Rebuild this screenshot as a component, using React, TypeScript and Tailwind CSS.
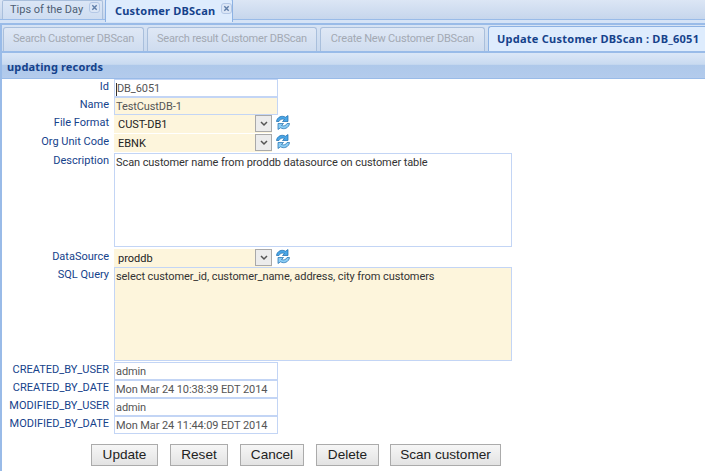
import type { ReactNode } from 'react'

const regular = "font-['Roboto','Noto_Sans',sans-serif]"
const bold = "font-['Noto_Sans',sans-serif] font-bold"

function CloseIcon() {
  return (
    <span className="ml-[6px] mb-[5px] flex h-[11px] w-[11px] items-center justify-center rounded-[3px] border border-[#b4c8e6] bg-[#dbe6f6]">
      <svg viewBox="0 0 8 8" className="h-[7px] w-[7px]">
        <path d="M1.500 1.500l5 5M6.500 1.500l-5 5" stroke="#5f7ea8" strokeWidth={1.6} />
      </svg>
    </span>
  )
}

function RefreshIcon() {
  return (
    <svg viewBox="0 0 16 17" className="ml-[3px] -mt-[1px] h-[17px] w-[16px]">
      <path d="M1.500 7.500C2 3 7 1 10.500 3.200L13 1.500V7.500H7.500L9.500 5.500C7.200 4.600 4.800 5.300 4 7.500z" fill="#4aa6e6" stroke="#1a6cae" strokeWidth={0.7} />
      <path d="M14.500 9.500C14 14 9 16 5.500 13.800L3 15.500V9.500H8.500L6.500 11.500C8.800 12.400 11.200 11.700 12 9.500z" fill="#8ccdf4" stroke="#1a6cae" strokeWidth={0.7} />
    </svg>
  )
}

function Row({ label, h, children }: { label: string; h: string; children: ReactNode }) {
  return (
    <div className={`flex ${h}`}>
      <div className="w-[108px] shrink-0 pr-[1px] pt-[1px] text-right text-[11px] leading-[14px] text-[#15428b]">{label}</div>
      <div className="ml-[4px] flex items-start">{children}</div>
    </div>
  )
}

function TextField({ value, cream, caret }: { value: string; cream?: boolean; caret?: boolean }) {
  return (
    <div className={`flex h-[18px] w-[164px] items-center border border-[#c3d5f5] pl-[1px] pt-[2px] text-[11px] tracking-[-0.1px] whitespace-nowrap text-[#555] ${cream ? 'bg-[#fdf5dc]' : 'bg-white'}`}>
      {caret && <span className="h-[13px] w-px shrink-0 bg-[#333]" />}
      {value}
    </div>
  )
}

function SelectField({ value }: { value: string }) {
  return (
    <>
      <div className="flex h-[18px] w-[158px] justify-between bg-[#fdf5dc] pl-[4px] text-[11px] leading-[14px] text-[#222]">
        <span className="pt-[3px]">{value}</span>
        <span className="flex h-[17px] w-[17px] items-center justify-center border border-[#a9a9a9] bg-[#ececec]">
          <svg viewBox="0 0 8 6" className="h-[6px] w-[8px]">
            <path d="M1 1l3 3 3-3" fill="none" stroke="#555" strokeWidth={1.5} />
          </svg>
        </span>
      </div>
      <RefreshIcon />
    </>
  )
}

function TextArea({ value, cream }: { value: string; cream?: boolean }) {
  return (
    <div className={`h-[94px] w-[398px] border border-[#c3d5f5] pl-[1px] pt-[2px] text-[11px] leading-[14px] tracking-[-0.08px] text-[#333] ${cream ? 'bg-[#fdf5dc]' : 'bg-white'}`}>
      {value}
    </div>
  )
}

function Button({ label, w }: { label: string; w: string }) {
  return (
    <button className={`h-[22px] ${w} border border-[#ababab] bg-gradient-to-b from-[#f6f6f6] to-[#e3e3e3] font-['Liberation_Sans',sans-serif] text-[13.6px] text-[#222]`}>
      {label}
    </button>
  )
}

function SubTab({ label, w }: { label: string; w: string }) {
  return (
    <div className={`flex h-[24px] ${w} items-center justify-center rounded-t-[3px] border border-b-0 border-[#a9bfdc] bg-gradient-to-b from-[#dfe8f5] to-[#cfdcef] text-[11px] tracking-[-0.2px] whitespace-nowrap text-[#a3a9b3]`}>
      {label}
    </div>
  )
}

export default function App() {
  return (
    <div className={`h-[471px] w-[705px] overflow-hidden bg-white ${regular}`}>
      {/* Outer tabs */}
      <div className="flex h-[20px] items-end border-b border-[#99bbe8] bg-gradient-to-b from-[#dce6f5] to-[#c6d6ec] pl-[2px]">
        <div className="flex h-[19px] w-[101px] items-center rounded-t-[2px] border border-b-0 border-[#a9bfdc] bg-gradient-to-b from-[#dbe6f6] to-[#cfddf1] pl-[7px] text-[11px] whitespace-nowrap text-[#4e5f74]">
          Tips of the Day
          <CloseIcon />
        </div>
        <div className={`ml-[2px] -mb-[3px] flex h-[23px] w-[128px] items-center rounded-t-[2px] border border-b-0 border-[#8db2e3] bg-[#deecfd] pl-[9px] text-[11px] tracking-[0.2px] whitespace-nowrap text-[#15428b] ${bold}`}>
          Customer DBScan
          <CloseIcon />
        </div>
      </div>
      <div className="h-[3px] bg-[#d5e3f6]" />

      <div className="flex h-[448px] flex-col border-l-[2px] border-[#99bbe8]">
        {/* Inner tabs */}
        <div className="flex h-[30px] items-end gap-[3px] border-y-[2px] border-[#99bbe8] bg-gradient-to-b from-[#d6e3f4] to-[#c9d9ee] pl-[1px]">
          <SubTab label="Search Customer DBScan" w="w-[141px]" />
          <SubTab label="Search result Customer DBScan" w="w-[170px]" />
          <SubTab label="Create New Customer DBScan" w="w-[165px]" />
          <div className={`flex h-[25px] flex-1 items-center rounded-tl-[3px] border-l border-t border-[#8db2e3] bg-[#deecfd] pl-[8px] text-[11px] tracking-[0.25px] whitespace-nowrap text-[#15428b] ${bold}`}>
            Update Customer DBScan : DB_6051
          </div>
        </div>

        {/* Panel header */}
        <div className={`flex h-[26px] items-end border-b border-[#99bbe8] bg-[linear-gradient(#dbe7f7_0%,#c9daf0_45%,#aec8ea_50%,#b3cbec_100%)] pb-[4px] pl-[5px] text-[11px] leading-[14px] tracking-[0.15px] text-[#15428b] ${bold}`}>
          updating records
        </div>

        {/* Form */}
        <div className="flex flex-col">
          <Row label="Id" h="h-[18px]"><TextField value="DB_6051" caret /></Row>
          <Row label="Name" h="h-[18px]"><TextField value="TestCustDB-1" cream /></Row>
          <Row label="File Format" h="h-[19px]"><SelectField value="CUST-DB1" /></Row>
          <Row label="Org Unit Code" h="h-[19px]"><SelectField value="EBNK" /></Row>
          <Row label="Description" h="h-[96px]"><TextArea value="Scan customer name from proddb datasource on customer table" /></Row>
          <Row label="DataSource" h="h-[18px]"><SelectField value="proddb" /></Row>
          <Row label="SQL Query" h="h-[95px]"><TextArea value="select customer_id, customer_name, address, city from customers" cream /></Row>
          <Row label="CREATED_BY_USER" h="h-[18px]"><TextField value="admin" /></Row>
          <Row label="CREATED_BY_DATE" h="h-[18px]"><TextField value="Mon Mar 24 10:38:39 EDT 2014" /></Row>
          <Row label="MODIFIED_BY_USER" h="h-[18px]"><TextField value="admin" /></Row>
          <Row label="MODIFIED_BY_DATE" h="h-[18px]"><TextField value="Mon Mar 24 11:44:09 EDT 2014" /></Row>
        </div>

        {/* Actions */}
        <div className="mt-[10px] flex pl-[89px]">
          <Button label="Update" w="w-[67px]" />
          <Button label="Reset" w="w-[58px] ml-[12px]" />
          <Button label="Cancel" w="w-[64px] ml-[12px]" />
          <Button label="Delete" w="w-[63px] ml-[12px]" />
          <Button label="Scan customer" w="w-[111px] ml-[11px]" />
        </div>
      </div>
    </div>
  )
}
